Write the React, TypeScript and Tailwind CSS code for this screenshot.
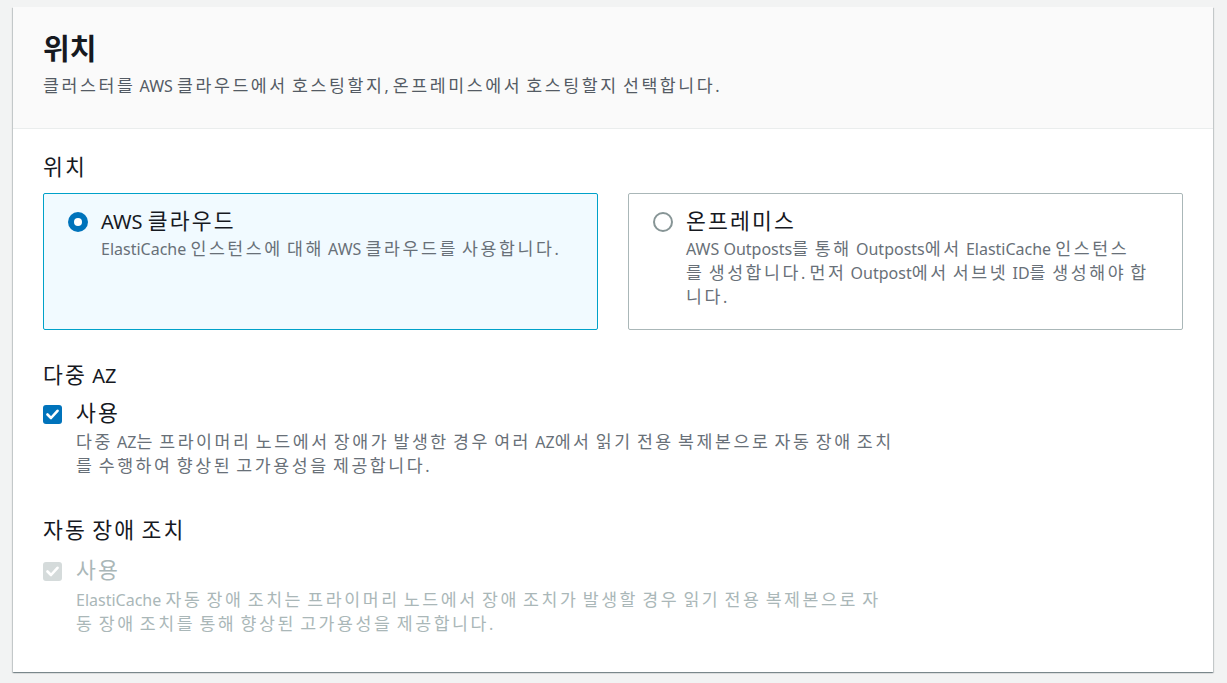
import React from "react";

const font = { fontFamily: '"Noto Sans", "Noto Sans CJK KR", sans-serif' };

function K({ t, label }: { t: string; label?: boolean }) {
  const parts = t.split(/([\uac00-\ud7a3\u3131-\u318e]+)/);
  return (
    <>
      {parts.map((p, i) =>
        /[\uac00-\ud7a3\u3131-\u318e]/.test(p) ? (
          <span
            key={i}
            className={
              label
                ? "text-[1.08em] leading-none tracking-[0.1em]"
                : "text-[1.08em] leading-none tracking-[0.15em]"
            }
          >
            {p}
          </span>
        ) : (
          <React.Fragment key={i}>{p}</React.Fragment>
        )
      )}
    </>
  );
}

function Lines({ lines }: { lines: string[] }) {
  return (
    <>
      {lines.map((l, i) => (
        <React.Fragment key={i}>
          {i > 0 && <br />}
          <K t={l} />
        </React.Fragment>
      ))}
    </>
  );
}

function Radio({ checked }: { checked: boolean }) {
  return checked ? (
    <span className="flex h-[20px] w-[20px] shrink-0 items-center justify-center rounded-full bg-[#0073bb]">
      <span className="block h-[8px] w-[8px] rounded-full bg-white" />
    </span>
  ) : (
    <span className="block h-[20px] w-[20px] shrink-0 rounded-full border-2 border-[#879596] bg-white" />
  );
}

function Check({ disabled }: { disabled?: boolean }) {
  return (
    <span
      className={`flex h-[19px] w-[19px] shrink-0 items-center justify-center rounded-[3px] ${
        disabled ? "bg-[#d5dbdb]" : "bg-[#0073bb]"
      }`}
    >
      <svg width="13" height="11" viewBox="0 0 13 11" fill="none">
        <path d="M1.5 5.5 L5 9 L11.5 1.8" stroke="white" strokeWidth="2.6" strokeLinecap="round" strokeLinejoin="round" />
      </svg>
    </span>
  );
}

export default function App() {
  return (
    <div className="min-h-[683px] bg-[#f2f3f3] pl-[13px] pr-[14px] pt-[7px]" style={font}>
      <div className="w-[1200px] bg-white shadow-[0_1px_1px_0_rgba(0,28,36,0.3),1px_1px_1px_0_rgba(0,28,36,0.15),-1px_1px_1px_0_rgba(0,28,36,0.15)]">
        <div className="border-b border-[#eaeded] bg-[#fafafa] px-[30px] pb-[30px] pt-[24px]">
          <h2 className="text-[29px] font-bold leading-[36px] text-[#16191f]">위치</h2>
          <p className="mt-[7px] text-[16px] leading-[24px] text-[#545b64]">
            <K t="클러스터를 AWS 클라우드에서 호스팅할지, 온프레미스에서 호스팅할지 선택합니다." />
          </p>
        </div>
        <div className="px-[30px] pb-[36px] pt-[26px]">
          <div className="text-[20px] leading-[26px] text-[#16191f]">
            <K t="위치" label />
          </div>
          <div className="mt-[12px] grid grid-cols-2 gap-[30px]">
            <div className="flex h-[137px] gap-[13px] rounded-[2px] border border-[#00a1c9] bg-[#f1faff] pl-[24px] pr-[24px] pt-[15px]">
              <div className="pt-[3px]">
                <Radio checked />
              </div>
              <div>
                <div className="text-[20px] leading-[26px] text-[#16191f]">
                  <K t="AWS 클라우드" label />
                </div>
                <div className="mt-[2px] text-[16px] leading-[24px] text-[#687078]">
                  <K t="ElastiCache 인스턴스에 대해 AWS 클라우드를 사용합니다." />
                </div>
              </div>
            </div>
            <div className="flex h-[137px] gap-[13px] rounded-[2px] border border-[#aab7b8] bg-white pl-[24px] pr-[24px] pt-[15px]">
              <div className="pt-[3px]">
                <Radio checked={false} />
              </div>
              <div>
                <div className="text-[20px] leading-[26px] text-[#16191f]">
                  <K t="온프레미스" label />
                </div>
                <div className="mt-[2px] text-[16px] leading-[24px] text-[#687078]">
                  <Lines
                    lines={[
                      "AWS Outposts를 통해 Outposts에서 ElastiCache 인스턴스",
                      "를 생성합니다. 먼저 Outpost에서 서브넷 ID를 생성해야 합",
                      "니다.",
                    ]}
                  />
                </div>
              </div>
            </div>
          </div>

          <div className="mt-[33px] text-[20px] leading-[26px] text-[#16191f]">
            <K t="다중 AZ" label />
          </div>
          <div className="mt-[12px] flex gap-[14px]">
            <div className="pt-[4px]">
              <Check />
            </div>
            <div>
              <div className="text-[20px] leading-[26px] text-[#16191f]">
                <K t="사용" label />
              </div>
              <div className="mt-[3px] text-[16px] leading-[24px] text-[#687078]">
                <Lines
                  lines={[
                    "다중 AZ는 프라이머리 노드에서 장애가 발생한 경우 여러 AZ에서 읽기 전용 복제본으로 자동 장애 조치",
                    "를 수행하여 향상된 고가용성을 제공합니다.",
                  ]}
                />
              </div>
            </div>
          </div>

          <div className="mt-[40px] text-[20px] leading-[26px] text-[#16191f]">
            <K t="자동 장애 조치" label />
          </div>
          <div className="mt-[14px] flex gap-[14px]">
            <div className="pt-[4px]">
              <Check disabled />
            </div>
            <div>
              <div className="text-[20px] leading-[26px] text-[#aab7b8]">
                <K t="사용" label />
              </div>
              <div className="mt-[4px] text-[16px] leading-[24px] text-[#aab7b8]">
                <Lines
                  lines={[
                    "ElastiCache 자동 장애 조치는 프라이머리 노드에서 장애 조치가 발생할 경우 읽기 전용 복제본으로 자",
                    "동 장애 조치를 통해 향상된 고가용성을 제공합니다.",
                  ]}
                />
              </div>
            </div>
          </div>
        </div>
      </div>
    </div>
  );
}
